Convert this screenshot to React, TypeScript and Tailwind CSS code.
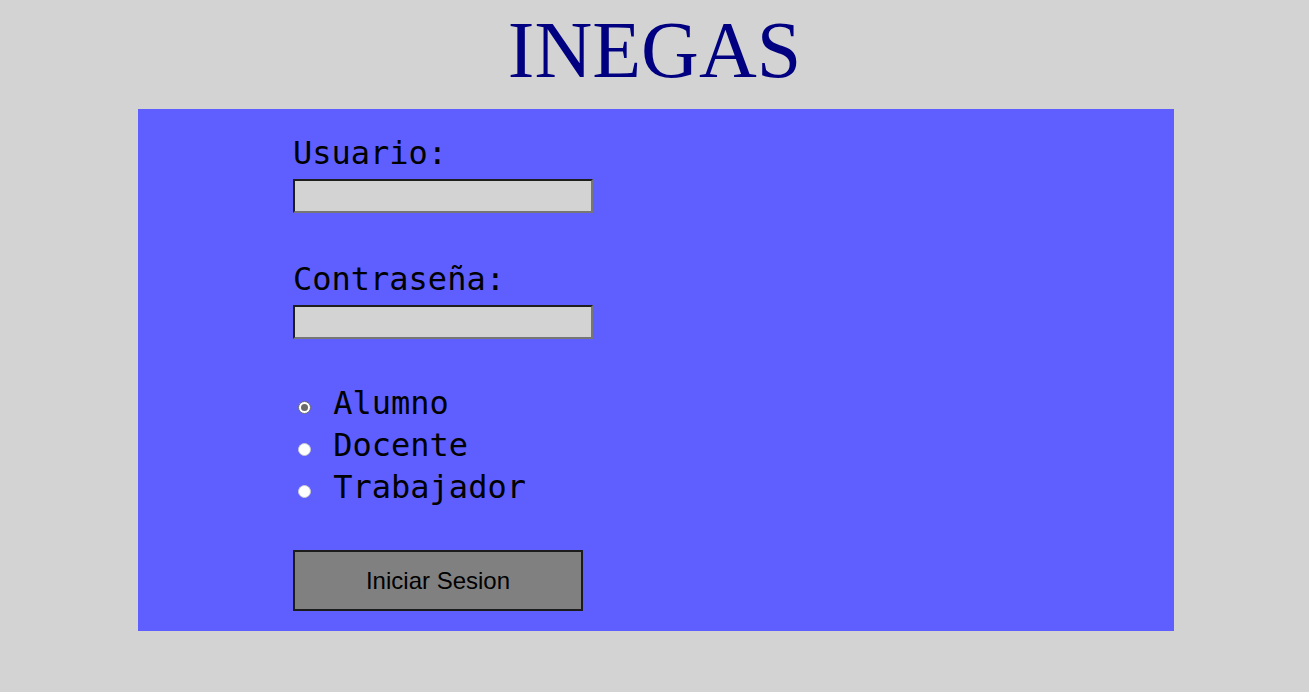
import React from "react";

const mono = "font-['DejaVu_Sans_Mono','Liberation_Mono',monospace]";

function Field({ label, gap }: { label: string; gap: string }) {
  return (
    <div className={gap}>
      <div className={`${mono} pt-[2px] text-[32px] leading-[37px] text-black`}>{label}</div>
      <input
        type="text"
        className="mt-[7px] block h-[34px] w-[300px] border-2 border-t-[#1e1e1e] border-l-[#1e1e1e] border-b-[#767676] border-r-[#767676] bg-[#d3d3d3] outline-none"
      />
    </div>
  );
}

function Radio({ label, checked }: { label: string; checked?: boolean }) {
  return (
    <div className={`${mono} text-[32px] leading-[42px] text-black whitespace-pre`}>
      <span
        className={
          checked
            ? "ml-[5px] mr-[3px] inline-block h-[13px] w-[13px] rounded-full border border-[#6b6b6b] bg-white p-[2px] align-baseline"
            : "ml-[5px] mr-[3px] inline-block h-[13px] w-[13px] rounded-full border border-[#c8c8c8] bg-white align-baseline"
        }
      >
        {checked && <span className="block h-[7px] w-[7px] rounded-full bg-[#6b6b6b]" />}
      </span>
      {" " + label}
    </div>
  );
}

export default function App() {
  return (
    <div className="min-h-[692px] w-full bg-[#d3d3d3]">
      <header className="h-[109px] pt-[10px]">
        <h1 className="text-center font-['Liberation_Serif','Times_New_Roman',serif] text-[80px] leading-[80px] text-[#000080]">
          INEGAS
        </h1>
      </header>
      <main className="ml-[138px] w-[1036px] bg-[#5f5fff] pl-[155px] pt-[24px] pb-[20px]">
        <Field label="Usuario:" gap="" />
        <Field label="Contraseña:" gap="mt-[46px]" />
        <div className="mt-[43px]">
          <Radio label="Alumno" checked />
          <Radio label="Docente" />
          <Radio label="Trabajador" />
        </div>
        <button className="mt-[42px] block h-[61px] w-[290px] border-2 border-[#1c1c1c] bg-[#808080] font-['Liberation_Sans',Arial,sans-serif] text-[24px] text-black">
          Iniciar Sesion
        </button>
      </main>
    </div>
  );
}
